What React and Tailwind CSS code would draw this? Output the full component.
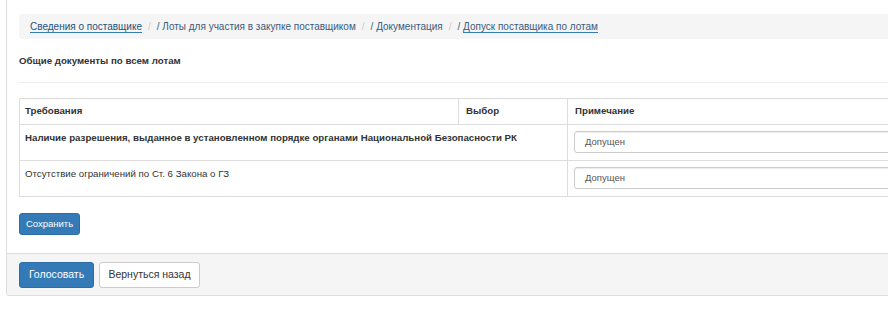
import React from "react";

const font = { fontFamily: '"Liberation Sans", Arial, sans-serif' };

const rows = [
  {
    text: "Наличие разрешения, выданное в установленном порядке органами Национальной Безопасности РК",
    bold: true,
  },
  { text: "Отсутствие ограничений по Ст. 6 Закона о ГЗ", bold: false },
];

function Breadcrumb() {
  return (
    <div className="flex h-[25px] items-center rounded-l-[4px] bg-[#f5f5f5] pl-[11px] text-[10px]">
      <a className="text-[#23527c] underline decoration-[#337ab7] underline-offset-2">
        Сведения о поставщике
      </a>
      <span className="px-[6px] text-[#ccc]">/</span>
      <span className="text-[#3d5b7c]">/ Лоты для участия в закупке поставщиком</span>
      <span className="px-[6px] text-[#ccc]">/</span>
      <span className="text-[#3d5b7c]">/ Документация</span>
      <span className="px-[6px] text-[#ccc]">/</span>
      <span className="text-[#3d5b7c]">
        /{" "}
        <a className="underline decoration-[#337ab7] underline-offset-2">Допуск поставщика по лотам</a>
      </span>
    </div>
  );
}

function Select() {
  return (
    <div className="flex h-[22px] w-[340px] items-center rounded-[3px] border border-[#ccc] pl-[10px] text-[9.5px] text-[#555] shadow-[inset_0_1px_1px_rgba(0,0,0,0.075)]">
      Допущен
    </div>
  );
}

export default function App() {
  return (
    <div className="h-[319px] w-[888px] overflow-hidden bg-white text-[#333]" style={font}>
      <div className="ml-[6px] w-[920px] rounded-b-[3px] border-b border-l border-[#ddd]">
        <div className="pl-[12px] pt-[14px]">
          <Breadcrumb />

          <h4 className="mt-[15px] text-[9.7px] font-bold leading-[14px]">Общие документы по всем лотам</h4>

          <div className="mt-[14px] border-t border-[#eee]" />

          <table className="mt-[15px] w-[890px] table-fixed border-collapse text-[9.7px]">
            <colgroup>
              <col className="w-[439px]" />
              <col className="w-[109px]" />
              <col />
            </colgroup>
            <thead>
              <tr className="h-[26px]">
                <th className="border border-[#ddd] px-[5px] text-left font-bold">Требования</th>
                <th className="border border-[#ddd] px-[7px] text-left font-bold">Выбор</th>
                <th className="border border-[#ddd] px-[7px] text-left font-bold">Примечание</th>
              </tr>
            </thead>
            <tbody>
              {rows.map((r) => (
                <tr key={r.text} className="h-[36px]">
                  <td
                    colSpan={2}
                    className={`border border-[#ddd] px-[5px] pt-[6px] align-top leading-[14px] ${
                      r.bold ? "font-bold" : ""
                    }`}
                  >
                    {r.text}
                  </td>
                  <td className="border border-[#ddd] pl-[6px] pt-[6px] align-top">
                    <Select />
                  </td>
                </tr>
              ))}
            </tbody>
          </table>

          <button className="mt-[16px] h-[22px] w-[61px] rounded-[3px] border border-[#2e6da4] bg-[#337ab7] text-[9.5px] text-white">
            Сохранить
          </button>
        </div>

        <div className="mt-[18px] flex gap-[5px] border-t border-[#ddd] bg-[#f5f5f5] pb-[7px] pl-[12px] pt-[8px]">
          <button className="h-[26px] w-[75px] rounded-[3px] border border-[#2e6da4] bg-[#337ab7] text-[10.5px] text-white">
            Голосовать
          </button>
          <button className="h-[26px] w-[101px] rounded-[3px] border border-[#ccc] bg-white text-[10.5px] text-[#333]">
            Вернуться назад
          </button>
        </div>
      </div>
    </div>
  );
}
